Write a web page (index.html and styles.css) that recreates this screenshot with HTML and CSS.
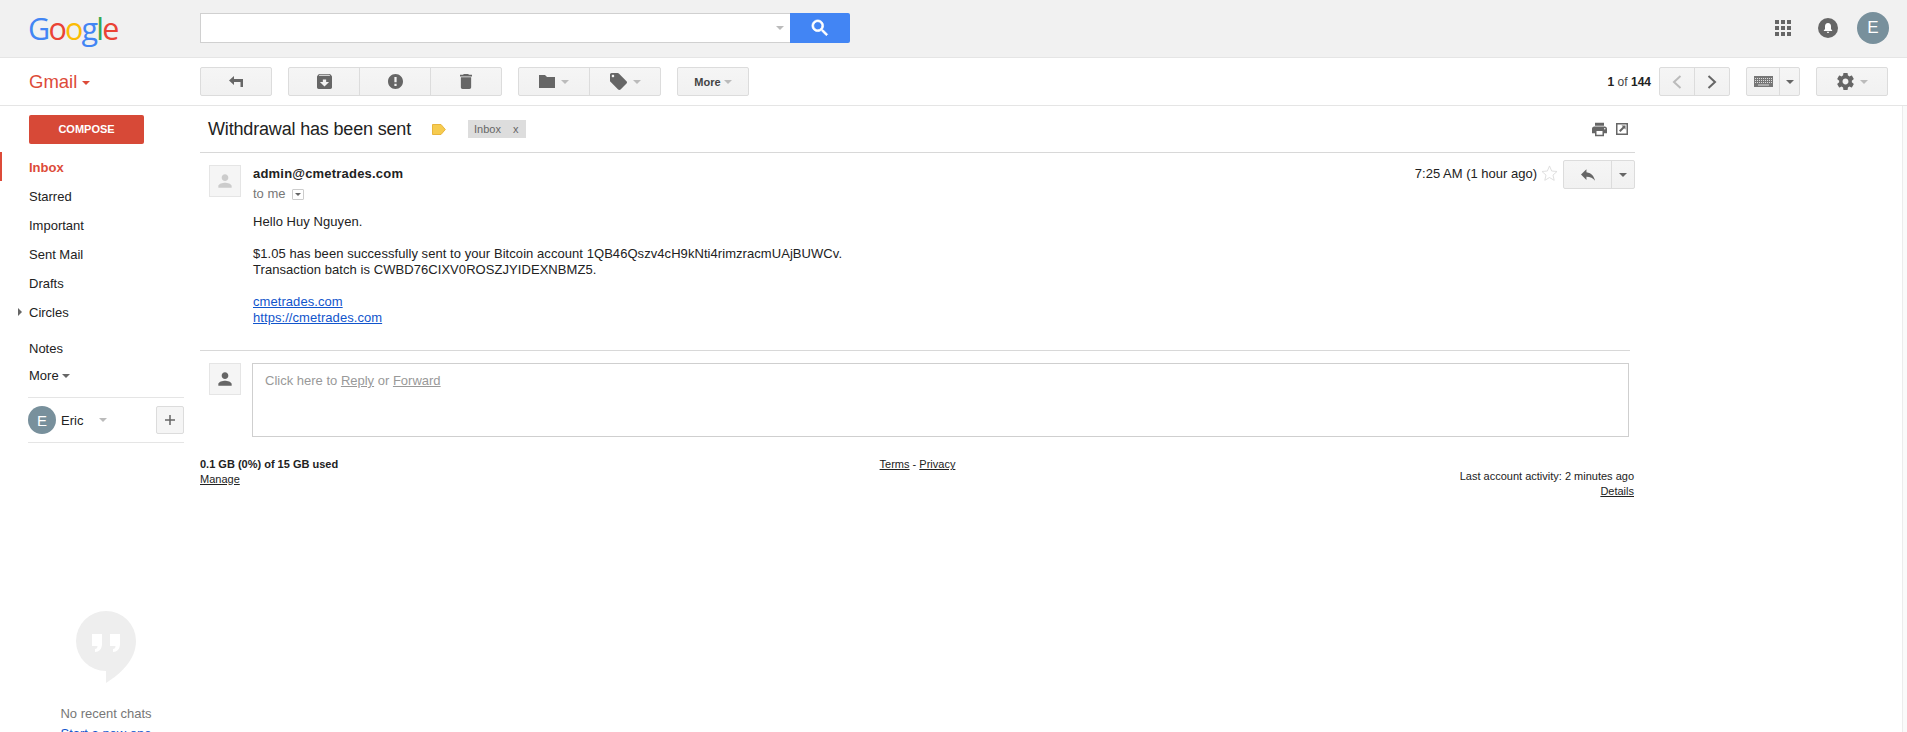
FILE: index.html
```html
<!DOCTYPE html>
<html>
<head>
<meta charset="utf-8">
<title>Withdrawal has been sent - Gmail</title>
<link rel="stylesheet" href="styles.css">
</head>
<body>

<header class="topbar">
  <div class="logo"><span class="blue">G</span><span class="red">o</span><span class="yellow">o</span><span class="blue">g</span><span class="green">l</span><span class="red">e</span></div>
  <div class="search">
    <div class="search-box"><i class="caret caret-light"></i></div>
    <div class="search-btn">
      <svg width="18" height="18" viewBox="2 2 20 20"><path fill="#fff" stroke="#fff" stroke-width=".8" d="M15.500 14h-.79l-.28-.27C15.410 12.590 16 11.110 16 9.500 16 5.910 13.090 3 9.500 3S3 5.910 3 9.500 5.910 16 9.500 16c1.610 0 3.090-.59 4.230-1.570l.27.28v.79l5 4.990L20.490 19l-4.990-5zm-6 0C7.010 14 5 11.990 5 9.500S7.010 5 9.500 5 14 7.010 14 9.500 11.990 14 9.500 14z"/></svg>
    </div>
  </div>
  <div class="top-right">
    <svg class="apps" width="16" height="16" viewBox="0 0 16 16"><path fill="#666" d="M0 0h4v4H0zM6 0h4v4H6zM12 0h4v4h-4zM0 6h4v4H0zM6 6h4v4H6zM12 6h4v4h-4zM0 12h4v4H0zM6 12h4v4H6zM12 12h4v4h-4z"/></svg>
    <svg class="bell" width="20" height="20" viewBox="0 0 20 20"><circle cx="10" cy="10" r="10" fill="#666"/><path fill="#fff" d="M10 5c-2 0-3 1.400-3 3.200V11l-1.200 1.400v.6h8.400v-.6L13 11V8.200C13 6.400 12 5 10 5zM8.700 13.800c.2.800.7 1.200 1.300 1.200s1.100-.4 1.300-1.200z"/></svg>
    <div class="avatar avatar-top">E</div>
  </div>
</header>

<div class="toolbar">
  <div class="gmail">Gmail <i class="caret caret-red"></i></div>
  <div class="btn-group w72">
    <div class="btn">
      <svg width="14" height="11" viewBox="0 0 14 11"><path fill="#666" d="M5 0 0 4.500 5 9V6h6.500v5H14V3H5z"/></svg>
    </div>
  </div>
  <div class="btn-group w214">
    <div class="btn"><svg width="15" height="15" viewBox="3 3 18 18"><path fill="#666" d="M20.540 5.230l-1.390-1.680C18.880 3.210 18.470 3 18 3H6c-.47 0-.88.21-1.160.55L3.460 5.230C3.170 5.570 3 6.020 3 6.500V19c0 1.100.9 2 2 2h14c1.100 0 2-.9 2-2V6.500c0-.48-.17-.93-.46-1.270zM12 18l-5.500-5.500H10v-3h4v3h3.500L12 18zM5.120 5l.81-1h12l.94 1H5.120z"/></svg></div>
    <div class="btn"><svg width="15" height="15" viewBox="2 2 20 20"><path fill="#666" d="M12 2C6.480 2 2 6.480 2 12s4.480 10 10 10 10-4.480 10-10S17.520 2 12 2zm1.500 16h-3v-3h3v3zm0-5h-3V6h3v7z"/></svg></div>
    <div class="btn"><svg width="12" height="15" viewBox="5 3 14 18" preserveAspectRatio="none"><path fill="#666" d="M6 19c0 1.100.9 2 2 2h8c1.100 0 2-.9 2-2V7H6v12zM19 4h-3.500l-1-1h-5l-1 1H5v2h14V4z"/></svg></div>
  </div>
  <div class="btn-group w143">
    <div class="btn gap6"><svg width="16" height="13" viewBox="0 0 16 13"><path fill="#666" d="M0 0h6l2 2h8v11H0z"/></svg><i class="caret caret-light"></i></div>
    <div class="btn gap6"><svg width="17" height="17" viewBox="2 2 20 20"><path fill="#666" d="M21.410 11.580l-9-9C12.050 2.220 11.550 2 11 2H4c-1.100 0-2 .9-2 2v7c0 .55.22 1.050.59 1.420l9 9c.36.36.86.58 1.410.58.55 0 1.050-.22 1.410-.59l7-7c.37-.36.59-.86.59-1.410 0-.55-.23-1.060-.59-1.420zM5.500 7C4.670 7 4 6.330 4 5.500S4.670 4 5.500 4 7 4.670 7 5.500 6.330 7 5.500 7z"/></svg><i class="caret caret-light"></i></div>
  </div>
  <div class="btn-group w72">
    <div class="btn btn-more">More <i class="caret caret-light"></i></div>
  </div>

  <div class="toolbar-right">
    <div class="pager"><b>1</b> of <b>144</b></div>
    <div class="btn-group pager-btns">
      <div class="btn"><svg width="10" height="14" viewBox="0 0 10 14"><path fill="none" stroke="#bbb" stroke-width="2" d="M8.500 1 2 7l6.500 6"/></svg></div>
      <div class="btn"><svg width="10" height="14" viewBox="0 0 10 14"><path fill="none" stroke="#666" stroke-width="2" d="M1.500 1 8 7l-6.500 6"/></svg></div>
    </div>
    <div class="btn-group kbd-btns">
      <div class="btn">
        <svg width="19" height="11" viewBox="0 0 19 11"><rect width="19" height="11" fill="#777"/><path stroke="#ddd" stroke-dasharray="1 1" d="M1 2.500h17M1 4.500h17M1 6.500h17"/><path stroke="#ddd" d="M4 9h11"/></svg>
      </div>
      <div class="btn"><i class="caret caret-dark"></i></div>
    </div>
    <div class="btn-group w72">
      <div class="btn gap6"><svg width="17" height="17" viewBox="2 2 20 20"><path fill="#666" d="M19.430 12.980c.04-.32.07-.64.07-.98s-.03-.66-.07-.98l2.110-1.650c.19-.15.24-.42.12-.64l-2-3.460c-.12-.22-.39-.3-.61-.22l-2.490 1c-.52-.4-1.080-.73-1.690-.98l-.38-2.650C14.460 2.180 14.250 2 14 2h-4c-.25 0-.46.18-.49.42l-.38 2.650c-.61.25-1.170.59-1.690.98l-2.490-1c-.23-.09-.49 0-.61.22l-2 3.460c-.13.22-.07.49.12.64l2.110 1.650c-.04.32-.07.65-.07.98s.03.66.07.98l-2.110 1.650c-.19.15-.24.42-.12.64l2 3.460c.12.22.39.3.61.22l2.490-1c.52.4 1.080.73 1.690.98l.38 2.650c.03.24.24.42.49.42h4c.25 0 .46-.18.49-.42l.38-2.650c.61-.25 1.170-.59 1.690-.98l2.490 1c.23.09.49 0 .61-.22l2-3.460c.12-.22.07-.49-.12-.64l-2.110-1.650zM12 15.500c-1.930 0-3.500-1.570-3.500-3.500s1.570-3.500 3.500-3.500 3.500 1.570 3.500 3.500-1.570 3.500-3.500 3.500z"/></svg><i class="caret caret-light"></i></div>
    </div>
  </div>
</div>

<div class="layout">
  <aside class="sidebar">
    <div class="compose">COMPOSE</div>
    <nav class="nav">
      <a class="nav-item active">Inbox</a>
      <a class="nav-item">Starred</a>
      <a class="nav-item">Important</a>
      <a class="nav-item">Sent Mail</a>
      <a class="nav-item">Drafts</a>
      <a class="nav-item circles"><i class="tri"></i>Circles</a>
      <a class="nav-item notes">Notes</a>
      <a class="nav-item more">More <i class="caret caret-dark"></i></a>
    </nav>
    <div class="account">
      <div class="avatar avatar-side">E</div>
      <span class="account-name">Eric</span>
      <i class="caret caret-light"></i>
      <div class="plus">
        <svg width="10" height="10" viewBox="0 0 10 10"><path stroke="#666" stroke-width="1.500" d="M5 0v10M0 5h10"/></svg>
      </div>
    </div>
    <div class="chats">
      <svg width="60" height="72" viewBox="0 0 60 72"><path fill="#eee" d="M30 0a30 30 0 0 1 30 30c0 18-14 32-30 42V60A30 30 0 0 1 30 0z"/><path fill="#fff" d="M16 23h10v10c0 5-3 8-7 8v-3c1.500 0 2.500-1 2.500-3H16zM34 23h10v10c0 5-3 8-7 8v-3c1.500 0 2.500-1 2.500-3H34z"/></svg>
      <p class="no-chats">No recent chats</p>
      <a class="new-chat">Start a new one</a>
    </div>
  </aside>

  <main class="main">
    <div class="content">
      <div class="subject-row">
        <h1 class="subject">Withdrawal has been sent</h1>
        <svg class="label-mark" width="14" height="11" viewBox="0 0 14 11"><path fill="#f6cb4f" stroke="#e8b53d" d="M.5.5h8.500l4.300 5-4.300 5H.5z"/></svg>
        <span class="chip">Inbox <span class="chip-x">x</span></span>
        <div class="subject-icons">
          <svg width="15" height="15" viewBox="2 3 20 18"><path fill="#666" d="M19 8H5c-1.660 0-3 1.340-3 3v6h4v4h12v-4h4v-6c0-1.660-1.340-3-3-3zm-3 11H8v-5h8v5zm3-7c-.55 0-1-.45-1-1s.45-1 1-1 1 .45 1 1-.45 1-1 1zm-1-9H6v4h12V3z"/></svg>
          <svg width="12" height="12" viewBox="0 0 12 12"><path fill="#666" d="M0 0h12v12H0zM1.500 1.500v9h9v-9zM5.500 2.500h4v4L8.200 5.200 4.500 9 3 7.500l3.800-3.700z"/></svg>
        </div>
      </div>

      <article class="message">
        <div class="photo photo-light"><svg width="20" height="20" viewBox="0 0 24 24"><path fill="#ccc" d="M12 12c2.210 0 4-1.790 4-4s-1.790-4-4-4-4 1.790-4 4 1.790 4 4 4zm0 2c-2.670 0-8 1.340-8 4v2h16v-2c0-2.660-5.330-4-8-4z"/></svg></div>
        <div class="message-body">
          <div class="message-head">
            <div>
              <div class="sender">admin@cmetrades.com</div>
              <div class="to-me">to me <span class="details-toggle"><i class="caret caret-dark"></i></span></div>
            </div>
            <div class="message-meta">
              <span class="time">7:25 AM (1 hour ago)</span>
              <svg class="star" width="17" height="16" viewBox="0 0 18 17"><path fill="none" stroke="#ddd" d="m9 1 2.300 5.400 5.700.5-4.300 3.800 1.300 5.600L9 13.300l-5 3 1.300-5.600L1 6.900l5.700-.5z"/></svg>
              <div class="btn-group reply-btns">
                <div class="btn"><svg width="14" height="12" viewBox="3 5 18 15"><path fill="#666" d="M10 9V5l-7 7 7 7v-4.100c5 0 8.500 1.600 11 5.100-1-5-4-10-11-11z"/></svg></div>
                <div class="btn"><i class="caret caret-dark"></i></div>
              </div>
            </div>
          </div>
          <div class="text">
            <p>Hello Huy Nguyen.</p>
            <p>$1.05 has been successfully sent to your Bitcoin account 1QB46Qszv4cH9kNti4rimzracmUAjBUWCv.<br>Transaction batch is CWBD76CIXV0ROSZJYIDEXNBMZ5.</p>
            <p><a href="#">cmetrades.com</a><br><a href="#">https://cmetrades.com</a></p>
          </div>
        </div>
      </article>

      <div class="reply-row">
        <div class="photo"><svg width="20" height="20" viewBox="0 0 24 24"><path fill="#666" d="M12 12c2.210 0 4-1.790 4-4s-1.790-4-4-4-4 1.790-4 4 1.790 4 4 4zm0 2c-2.670 0-8 1.340-8 4v2h16v-2c0-2.660-5.330-4-8-4z"/></svg></div>
        <div class="reply-box">Click here to <u>Reply</u> or <u>Forward</u></div>
      </div>

      <footer class="foot">
        <div>
          <b>0.1 GB (0%) of 15 GB used</b><br>
          <a href="#">Manage</a>
        </div>
        <div><a href="#">Terms</a> - <a href="#">Privacy</a></div>
        <div class="foot-right">
          Last account activity: 2 minutes ago<br>
          <a href="#">Details</a>
        </div>
      </footer>
    </div>
    <div class="scroll-track"></div>
  </main>
</div>

</body>
</html>
```

FILE: styles.css
```css
html, body {
    height: 732px;
    margin: 0;
    overflow: hidden;
}
body {
    font-family: "Liberation Sans", Arial, sans-serif;
    font-size: 13px;
    color: #222;
    background-color: #fff;
}
svg {
    display: block;
}
.caret {
    display: inline-block;
    width: 0;
    height: 0;
    border-left: 4px solid transparent;
    border-right: 4px solid transparent;
    border-top: 4px solid #666;
}
.caret-light {
    border-top-color: #bbb;
}
.caret-red {
    border-top-color: #dd4b39;
    vertical-align: middle;
}
.caret-dark {
    border-top-color: #666;
}

/* top grey bar */
.topbar {
    display: flex;
    align-items: center;
    height: 57px;
    background-color: #f1f1f1;
    border-bottom: 1px solid #e5e5e5;
}
.logo {
    width: 200px;
    padding-left: 28px;
    box-sizing: border-box;
    font-family: "Open Sans", sans-serif;
    font-size: 30.500px;
    font-weight: 500;
    letter-spacing: -1.800px;
    line-height: 57px;
}
.blue { color: #4285f4; }
.red { color: #ea4335; }
.yellow { color: #fbbc05; }
.green { color: #34a853; }
.search {
    display: flex;
    height: 30px;
    margin-bottom: 1px;
}
.search-box {
    display: flex;
    align-items: center;
    justify-content: flex-end;
    width: 590px;
    box-sizing: border-box;
    padding-right: 6px;
    background-color: #fff;
    border: 1px solid #d0d0d0;
    border-right: none;
}
.search-btn {
    display: flex;
    align-items: center;
    justify-content: center;
    width: 60px;
    background-color: #4285f4;
    border-radius: 0 2px 2px 0;
}
.top-right {
    display: flex;
    align-items: center;
    margin-left: auto;
    margin-bottom: 1px;
    padding-right: 18px;
}
.apps {
    margin-right: 27px;
}
.bell {
    margin-right: 19px;
}
.avatar {
    display: flex;
    align-items: center;
    justify-content: center;
    border-radius: 50%;
    background-color: #78909c;
    color: #fff;
}
.avatar-top {
    width: 32px;
    height: 32px;
    font-size: 17px;
}
.avatar-side {
    flex: 0 0 28px;
    height: 28px;
    font-size: 15px;
}

/* toolbar */
.toolbar {
    display: flex;
    align-items: center;
    height: 47px;
    border-bottom: 1px solid #e5e5e5;
}
.gmail {
    width: 200px;
    padding-left: 29px;
    box-sizing: border-box;
    font-size: 18.500px;
    color: #dd4b39;
}
.btn-group {
    display: flex;
    height: 29px;
    margin-right: 16px;
    background: linear-gradient(#f5f5f5, #f1f1f1);
    border: 1px solid #dcdcdc;
    border-radius: 2px;
    box-sizing: border-box;
}
.btn {
    display: flex;
    flex: 1;
    align-items: center;
    justify-content: center;
    border-left: 1px solid #dcdcdc;
}
.btn:first-child {
    border-left: none;
}
.gap6 {
    gap: 6px;
}
.w72 {
    width: 72px;
}
.w214 {
    width: 214px;
}
.w143 {
    width: 143px;
}
.btn-more {
    gap: 3px;
    font-size: 11px;
    font-weight: bold;
    color: #444;
}
.toolbar-right {
    display: flex;
    align-items: center;
    margin-left: auto;
    padding-right: 3px;
}
.pager {
    margin-right: 8px;
    font-size: 12px;
    color: #444;
}
.pager b {
    color: #222;
}
.pager-btns {
    width: 71px;
}
.kbd-btns {
    width: 54px;
}
.kbd-btns .btn:last-child {
    flex: 0 0 19px;
}

/* page body */
.layout {
    display: flex;
    height: 626px;
}
.sidebar {
    flex: 0 0 200px;
    min-width: 0;
    box-sizing: border-box;
    padding: 9px 16px 0 29px;
}
.compose {
    width: 115px;
    height: 29px;
    margin-bottom: 8px;
    background-color: #d74937;
    border-radius: 2px;
    color: #fff;
    font-size: 11px;
    font-weight: bold;
    line-height: 29px;
    text-align: center;
}
.nav-item {
    display: block;
    height: 29px;
    line-height: 31px;
    font-size: 13px;
    color: #222;
}
.active {
    margin-left: -29px;
    padding-left: 27px;
    border-left: 2px solid #dd4b39;
    color: #dd4b39;
    font-weight: bold;
}
.circles {
    position: relative;
    margin-top: 1px;
    line-height: 29px;
}
.tri {
    position: absolute;
    left: -11px;
    top: 10px;
    border-left: 4px solid #666;
    border-top: 4px solid transparent;
    border-bottom: 4px solid transparent;
}
.notes {
    margin-top: 6px;
}
.more {
    margin-top: -1px;
    line-height: 29px;
}
.more .caret {
    vertical-align: 2px;
}
.account {
    display: flex;
    align-items: center;
    height: 44px;
    margin: 7px 0 0 -1px;
    border-top: 1px solid #e5e5e5;
    border-bottom: 1px solid #e5e5e5;
}
.account-name {
    margin-left: 5px;
    font-size: 13px;
}
.account .caret {
    margin-left: 16px;
}
.plus {
    display: flex;
    align-items: center;
    justify-content: center;
    width: 28px;
    height: 28px;
    margin-left: auto;
    box-sizing: border-box;
    background-color: #f5f5f5;
    border: 1px solid #dcdcdc;
    border-radius: 2px;
}
.chats {
    display: flex;
    flex-direction: column;
    align-items: center;
    margin: 168px 0 0 -29px;
    width: 212px;
    font-size: 13px;
}
.no-chats {
    margin: 24px 0 0;
    line-height: 14px;
    color: #777;
}
.new-chat {
    margin-top: 6px;
    line-height: 14px;
    color: #15c;
}

/* message column */
.main {
    display: flex;
    flex: 1;
    min-width: 0;
}
.content {
    width: 1435px;
}
.scroll-track {
    width: 4px;
    margin-left: auto;
    background-color: #fafafa;
    border-left: 1px solid #ececec;
}
.subject-row {
    display: flex;
    align-items: center;
    height: 46px;
    padding-left: 8px;
    border-bottom: 1px solid #d8d8d8;
}
.subject {
    margin: 0;
    font-size: 18px;
    font-weight: normal;
    letter-spacing: -0.170px;
    color: #222;
}
.label-mark {
    margin-left: 21px;
}
.chip {
    margin-left: 22px;
    width: 58px;
    box-sizing: border-box;
    height: 18px;
    padding-left: 6px;
    background-color: #ddd;
    color: #666;
    font-size: 11px;
    line-height: 18px;
}
.chip-x {
    margin-left: 9px;
}
.subject-icons {
    display: flex;
    align-items: center;
    gap: 9px;
    margin-left: auto;
    padding-right: 7px;
}
.message {
    display: flex;
    padding: 12px 0 24px 9px;
    border-bottom: 1px solid #d8d8d8;
    margin-right: 5px;
}
.photo {
    display: flex;
    flex: 0 0 32px;
    align-items: center;
    justify-content: center;
    height: 32px;
    box-sizing: border-box;
    background-color: #f5f5f5;
    border: 1px solid #e5e5e5;
}
.message-body {
    flex: 1;
    margin-left: 12px;
}
.message-head {
    display: flex;
    justify-content: space-between;
    height: 49px;
    margin-right: -5px;
}
.sender {
    font-weight: bold;
    letter-spacing: 0.200px;
    line-height: 17px;
}
.to-me {
    display: flex;
    align-items: center;
    gap: 6px;
    margin-top: 4px;
    line-height: 16px;
    font-size: 13px;
    color: #777;
}
.details-toggle {
    display: flex;
    align-items: center;
    justify-content: center;
    width: 10px;
    height: 9px;
    border: 1px solid #ccc;
    border-radius: 1px;
}
.details-toggle .caret {
    border-width: 3px 3px 0;
    border-top-color: #666;
    border-left-color: transparent;
    border-right-color: transparent;
}
.message-meta {
    display: flex;
    align-items: flex-start;
    margin-top: -5px;
}
.time {
    margin-top: 5px;
    font-size: 13px;
    line-height: 17px;
    color: #222;
}
.star {
    margin: 5px 5px 0 4px;
}
.reply-btns {
    width: 72px;
    margin-right: 0;
}
.reply-btns .btn:last-child {
    flex: 0 0 22px;
}
.text {
    font-size: 13px;
    letter-spacing: 0.060px;
    line-height: 16px;
}
.text p {
    margin: 0 0 16px;
}
.text p:last-child {
    margin: 0;
}
.text a {
    color: #15c;
}
.reply-row {
    display: flex;
    padding: 12px 0 0 9px;
}
.reply-box {
    width: 1377px;
    height: 74px;
    margin-left: 11px;
    padding: 9px 12px;
    box-sizing: border-box;
    border: 1px solid #cfcfcf;
    font-size: 13px;
    line-height: 16px;
    color: #999;
}
.foot {
    display: grid;
    grid-template-columns: 1fr auto 1fr;
    margin-top: 20px;
    font-size: 11px;
    line-height: 15px;
    color: #222;
}
.foot a {
    color: #222;
}
.foot-right {
    padding-top: 12px;
    padding-right: 1px;
    text-align: right;
}
```
